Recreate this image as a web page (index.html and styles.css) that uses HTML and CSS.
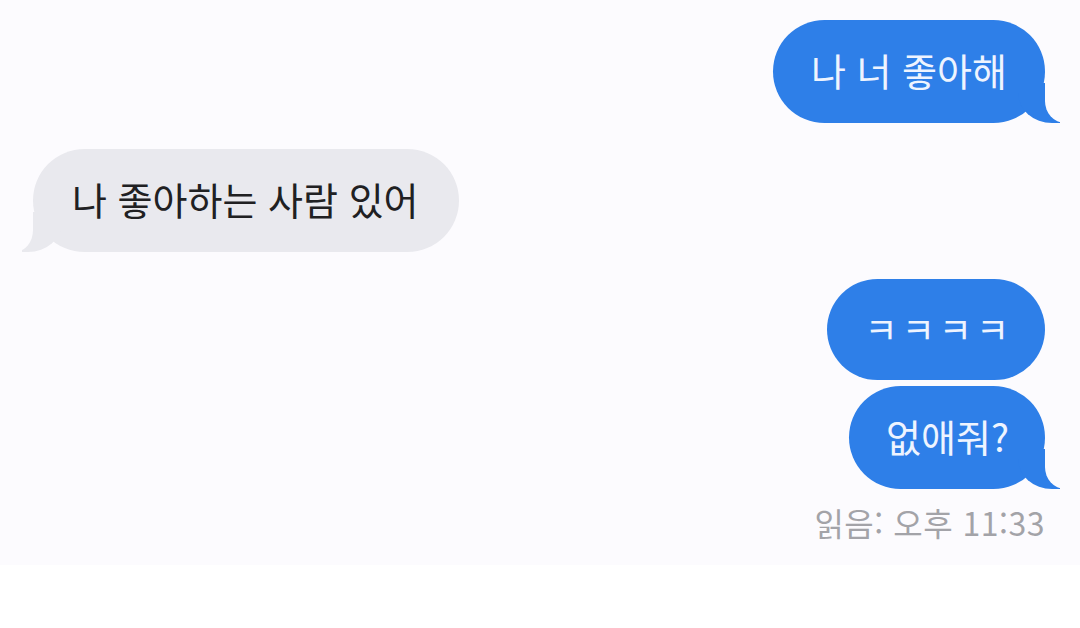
FILE: index.html
```html
<!DOCTYPE html>
<html lang="ko">
<head>
    <meta charset="UTF-8">
    <meta name="viewport" content="width=device-width, initial-scale=1.0">
    <title>Messages</title>
    <link rel="stylesheet" href="styles.css">
</head>
<body>
    <div class="chat">
        <div class="bubble sent tail">나 너 좋아해</div>
        <div class="bubble received tail">나 좋아하는 사람 있어</div>
        <div class="bubble sent small">ㅋㅋㅋㅋ</div>
        <div class="bubble sent tail joined">없애줘?</div>
        <div class="receipt">읽음: 오후 11:33</div>
    </div>
</body>
</html>
```

FILE: styles.css
```css
body {
    margin: 0;
    padding: 0;
    background-color: #fff;
    font-family: "Noto Sans CJK KR", "Noto Sans", sans-serif;
}

.chat {
    display: flex;
    flex-direction: column;
    align-items: flex-end;
    padding: 20px 35px 0 33px;
    height: 565px;
    box-sizing: border-box;
    background-color: #fcfbfe;
}

.bubble {
    position: relative;
    flex-shrink: 0;
    height: 103px;
    box-sizing: border-box;
    display: flex;
    align-items: center;
    padding: 0 38px 4px;
    border-radius: 52px;
    font-size: 38px;
    line-height: 1;
}

.sent {
    background-color: #2e7fe8;
    color: #eef4ff;
}

.received {
    align-self: flex-start;
    background-color: #e9e9ee;
    color: #202022;
    margin-top: 26px;
    padding: 0 40px 4px 39px;
}

.small {
    margin-top: 27px;
    padding: 0 32px 4px 38px;
    height: 101px;
    font-size: 36px;
    letter-spacing: 4px;
}

.joined {
    margin-top: 6px;
    padding: 0 36px 4px 37px;
}

/* bubble tails */
.tail::before,
.tail::after {
    content: "";
    position: absolute;
    bottom: 0;
    height: 40px;
}

.sent.tail::before {
    right: -15px;
    border-right: 42px solid #2e7fe8;
    border-bottom-left-radius: 34px 30px;
}

.sent.tail::after {
    right: -26px;
    width: 26px;
    background-color: #fcfbfe;
    border-bottom-left-radius: 20px 22px;
}

.received.tail::before {
    left: -11px;
    border-left: 40px solid #e9e9ee;
    border-bottom-right-radius: 34px 30px;
}

.received.tail::after {
    left: -24px;
    width: 24px;
    background-color: #fcfbfe;
    border-bottom-right-radius: 18px 22px;
}

.receipt {
    margin-top: 10px;
    font-size: 32px;
    color: #a3a3a8;
    letter-spacing: 0.5px;
}
```
